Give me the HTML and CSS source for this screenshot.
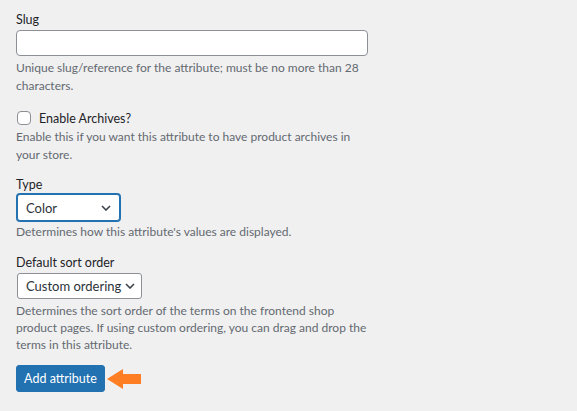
FILE: index.html
```html
<!DOCTYPE html>
<html lang="en">
<head>
<meta charset="utf-8">
<title>Add attribute</title>
<link rel="stylesheet" href="styles.css">
</head>
<body>
<form class="form">
  <div class="field field-slug">
    <label class="label">Slug</label>
    <div class="input"></div>
    <p class="desc">Unique slug/reference for the attribute; must be no more than 28 characters.</p>
  </div>
  <div class="field field-archive">
    <label class="check-row"><span class="checkbox"></span><span class="check-label">Enable Archives?</span></label>
    <p class="desc">Enable this if you want this attribute to have product archives in your store.</p>
  </div>
  <div class="field field-type">
    <label class="label">Type</label>
    <div class="select select-type focused"><span>Color</span><svg class="chev" width="10" height="6" viewBox="0 0 10 6"><path d="M1 1l4 4 4-4" fill="none" stroke="#3c434a" stroke-width="1.6"/></svg></div>
    <p class="desc">Determines how this attribute's values are displayed.</p>
  </div>
  <div class="field field-order">
    <label class="label">Default sort order</label>
    <div class="select select-order"><span>Custom ordering</span><svg class="chev" width="10" height="6" viewBox="0 0 10 6"><path d="M1 1l4 4 4-4" fill="none" stroke="#3c434a" stroke-width="1.6"/></svg></div>
    <p class="desc desc-tight">Determines the sort order of the terms on the frontend shop product pages. If using custom ordering, you can drag and drop the terms in this attribute.</p>
  </div>
  <div class="submit-row">
    <button type="button" class="button">Add attribute</button>
    <svg class="arrow" width="36" height="22" viewBox="0 0 36 22"><polygon points="0,11 16,1 16,6 34,6 34,16 16,16 16,21" fill="#fd7e23"/></svg>
  </div>
</form>
</body>
</html>
```

FILE: styles.css
```css
html, body {
  margin: 0;
  padding: 0;
  background: #f0f0f1;
}
body {
  font-family: Lato, "Noto Sans", sans-serif;
  font-size: 12px;
  color: #1d2327;
}
.form {
  width: 352px;
  padding: 12px 16px 0 16px;
}
.field { margin: 0; }
.label {
  display: block;
  line-height: 16px;
  font-size: 12.5px;
  color: #1d2327;
}
.input {
  margin-top: 2px;
  height: 24px;
  width: 350px;
  background: #fff;
  border: 1px solid #8c8f94;
  border-radius: 4px;
}
.desc {
  margin: 3px 0 0 0;
  color: #646970;
  line-height: 18px;
}
.field-archive { margin-top: 14px; }
.check-row {
  display: flex;
  align-items: center;
  height: 18px;
}
.checkbox {
  width: 12px;
  height: 12px;
  margin-left: 1px;
  background: #fff;
  border: 1px solid #8c8f94;
  border-radius: 4px;
}
.check-label {
  margin-left: 8px;
  font-size: 12.5px;
  color: #1d2327;
}
.field-archive .desc { margin-top: 1px; }
.field-type { margin-top: 13px; }
.select {
  margin-top: 1px;
  display: flex;
  align-items: center;
  justify-content: space-between;
  gap: 4px;
  box-sizing: border-box;
  height: 27px;
  padding: 0 8px 0 8px;
  background: #fff;
  border: 1px solid #8c8f94;
  border-radius: 3px;
  color: #2c3338;
  font-size: 13px;
  white-space: nowrap;
}
.chev { flex-shrink: 0; }
.select-type {
  width: 103px;
  margin-left: 1px;
  margin-top: 1px;
}
.focused {
  border-color: #2271b1;
  box-shadow: 0 0 0 1px #2271b1;
}
.select-order {
  width: 125px;
  height: 26px;
  margin-left: 1px;
  margin-top: 2px;
}
.field-type .desc { margin-top: 2px; }
.field-order { margin-top: 14px; }
.field-order .desc { margin-top: 3px; line-height: 17px; }
.submit-row {
  margin-top: 12px;
  display: flex;
  align-items: center;
}
.button {
  box-sizing: border-box;
  width: 89px;
  height: 27px;
  padding: 0;
  background: #2271b1;
  border: 1px solid #2271b1;
  border-radius: 3px;
  color: #fff;
  font-family: inherit;
  font-size: 12.5px;
  line-height: 25px;
  text-align: center;
  white-space: nowrap;
}
.arrow {
  margin-left: 2px;
}
```
